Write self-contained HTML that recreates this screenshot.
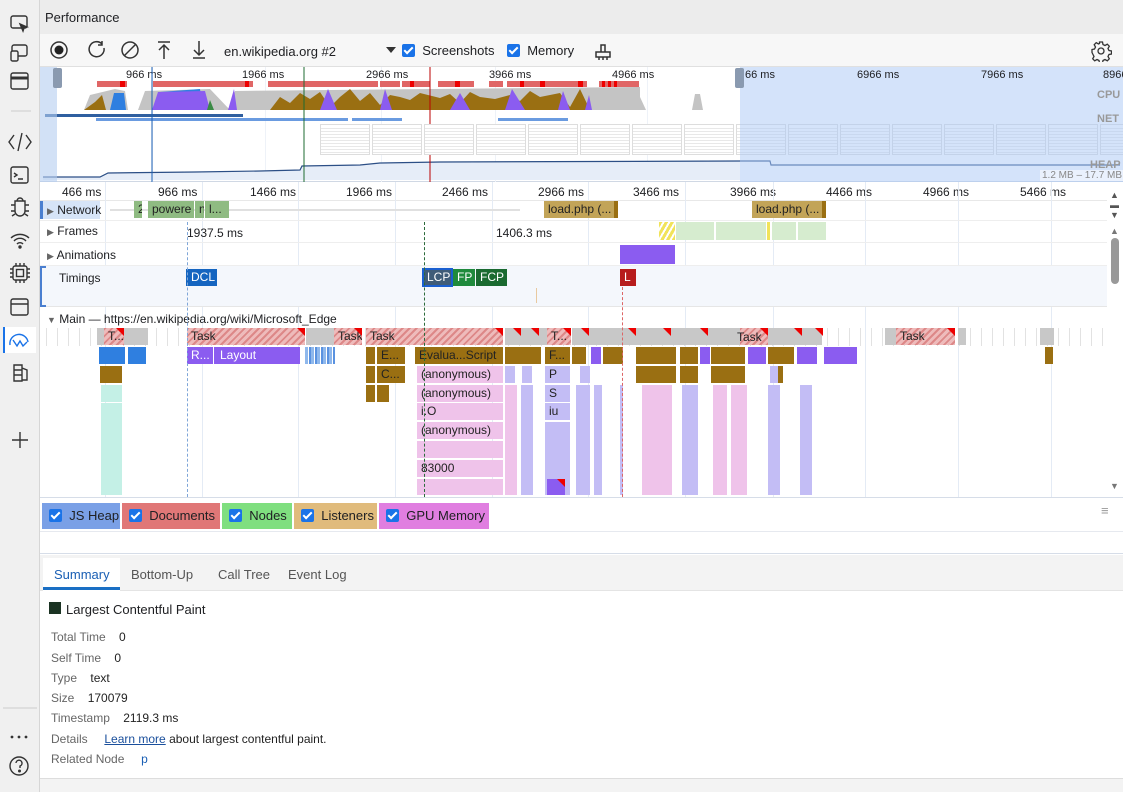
<!DOCTYPE html>
<html><head><meta charset="utf-8">
<style>
*{box-sizing:border-box;margin:0;padding:0}
body{width:1123px;height:792px;overflow:hidden;background:#fff;font-family:"Liberation Sans",sans-serif;font-size:12px;color:#202124;position:relative}
.a{position:absolute}
.t{position:absolute;white-space:nowrap}
.side{left:0;top:0;width:40px;height:792px;background:#f0f0f0;border-right:1px solid #d6d6d6}
.ic{position:absolute;left:10px;width:20px;height:20px}
.hat{background:repeating-linear-gradient(135deg,#d88 0 2px,#eebbbb 2px 5px)}
.g{background:#c8c8c8}
.br{background:#9a6f12}
.pu{background:#8b5cf0}
.pk{background:#efc3ea}
.lv{background:#c3bdf5}
.bl{background:#2f7fe0}
.tq{background:#c4f0e6}
.fl{position:absolute;height:17px;font-size:12px;line-height:17px;padding-left:4px;overflow:hidden;color:#222}
.rc{position:absolute;width:0;height:0;border-top:8px solid #e00;border-left:8px solid transparent}
.cb{display:inline-block;width:13px;height:13px;background:#1a73e8;border-radius:2px;vertical-align:-2px;position:relative}
.cb:after{content:"";position:absolute;left:4px;top:1px;width:3px;height:7px;border:solid #fff;border-width:0 2px 2px 0;transform:rotate(45deg)}
.thumb{position:absolute;top:124px;width:50px;height:31px;border:1px solid #ddd;background:linear-gradient(#fff 0 3px,transparent 3px),repeating-linear-gradient(#e8e8e8 0 1px,#fff 1px 3px);}
.vl{position:absolute;width:1px;background:#e4ebf5}
</style></head><body>

<!-- sidebar -->
<div class="a side"></div>
<svg class="a" style="left:0;top:0" width="40" height="792" fill="none" stroke="#333" stroke-width="1.4">
<rect x="11" y="16" width="16" height="12" rx="2"/><path d="M20 24l3 7 1-3 3-1z" fill="#333"/>
<rect x="12" y="45" width="15" height="11" rx="2"/><rect x="11" y="51" width="7" height="10" rx="1.5" fill="#f0f0f0"/>
<rect x="11" y="73" width="17" height="16" rx="2"/><path d="M11 78h17" stroke-width="3"/>
<path d="M14 135l-5 7 5 7M26 135l5 7-5 7M22 133l-4 18"/>
<rect x="11" y="167" width="17" height="16" rx="2"/><path d="M14 173l3 2-3 2M18 179h5"/>
<path d="M15 201h10v10a5 5 0 0 1-10 0zM17 201a3 3 0 0 1 6 0M11 205h4M25 205h4M11 211h4M25 211h4M12 216l3-2M28 216l-3-2"/>
<path d="M11 238a13 13 0 0 1 18 0M14 241a8 8 0 0 1 12 0M17 244a4 4 0 0 1 6 0"/><circle cx="20" cy="247" r="1" fill="#333"/>
<rect x="13" y="266" width="14" height="14" rx="2"/><rect x="16.5" y="269.5" width="7" height="7"/><path d="M16 263v3M20 263v3M24 263v3M16 280v3M20 280v3M24 280v3M10 269h3M10 273h3M10 277h3M27 269h3M27 273h3M27 277h3"/>
<rect x="11" y="299" width="17" height="16" rx="2"/><path d="M11 304h17"/>
<rect x="4" y="327" width="32" height="26" fill="#fff" stroke="none"/><path d="M4 327v26" stroke="#1a73e8" stroke-width="2"/>
<path d="M10 345a9 9 0 0 1 18-3M13 340l4 6 3-5 3 5 4-4" stroke="#1a73e8"/>
<path d="M14 365h8v16h-8zM14 370h8M14 375h8M22 368l5 2v10h-5"/>
<path d="M20 432v16M12 440h16"/>
<path d="M11 111h20M3 708h34" stroke="#ccc" stroke-width="1"/>
<circle cx="12" cy="737" r="1.4" fill="#333" stroke="none"/><circle cx="19" cy="737" r="1.4" fill="#333" stroke="none"/><circle cx="26" cy="737" r="1.4" fill="#333" stroke="none"/>
<circle cx="19" cy="766" r="9"/><path d="M16 763a3 3 0 1 1 4 3v2"/><circle cx="19.5" cy="771" r=".8" fill="#333"/>
</svg>

<!-- title -->
<div class="a" style="left:40px;top:0;width:1083px;height:34px;background:#ececec"></div>
<div class="t" style="left:45px;top:10px;font-size:13px">Performance</div>

<!-- toolbar -->
<div class="a" style="left:40px;top:34px;width:1083px;height:33px;background:#f7f7f7;border-bottom:1px solid #e0e0e0"></div>
<svg class="a" style="left:40px;top:34px" width="600" height="33" fill="none" stroke="#333" stroke-width="1.5">
<circle cx="19" cy="16" r="8"/><circle cx="19" cy="16" r="4.5" fill="#222" stroke="none"/>
<path d="M62 10a7.5 7.5 0 1 0 2 4M62 7v4h-4"/>
<circle cx="90" cy="16" r="8"/><path d="M84 22l12-12"/>
<path d="M118 8h12M124 11v14M119 16l5-5 5 5"/>
<path d="M153 24h12M159 7v14M154 16l5 5 5-5"/>
<path d="M346 13h10l-5 6z" fill="#333" stroke="none"/>
<path d="M556 18h14v5h-14zM561 18v-7h4v7M559 23v3M563 23v3M567 23v3"/>
</svg>
<div class="t" style="left:224px;top:44px;font-size:13px">en.wikipedia.org #2</div>
<div class="t" style="left:402px;top:43px;font-size:13px"><span class="cb"></span>&nbsp; Screenshots</div>
<div class="t" style="left:507px;top:43px;font-size:13px"><span class="cb"></span>&nbsp; Memory</div>
<svg class="a" style="left:1090px;top:40px" width="22" height="22" fill="none" stroke="#333" stroke-width="1.3"><circle cx="11" cy="11" r="3"/><path d="M9.5 2h3l.5 2.5 2 1 2.3-1.3 2 2-1.3 2.3 1 2 2.5.5v3l-2.5.5-1 2 1.3 2.3-2 2-2.3-1.3-2 1-.5 2.5h-3l-.5-2.5-2-1-2.3 1.3-2-2 1.3-2.3-1-2L2 12.5v-3l2.5-.5 1-2L4.2 4.7l2-2L8.5 4l1-.5z"/></svg>

<!-- overview -->
<div class="a" style="left:40px;top:67px;width:1083px;height:115px;background:#fff;border-bottom:1px solid #d0d8e4"></div>
<div class="vl" style="left:152px;top:67px;height:115px;background:#eef2f8"></div>
<div class="vl" style="left:265px;top:67px;height:115px;background:#eef2f8"></div>
<div class="vl" style="left:381px;top:67px;height:115px;background:#eef2f8"></div>
<div class="vl" style="left:495px;top:67px;height:115px;background:#eef2f8"></div>
<div class="vl" style="left:647px;top:67px;height:115px;background:#eef2f8"></div>
<div class="t" style="left:126px;top:69px;font-size:11px">966 ms</div>
<div class="t" style="left:242px;top:69px;font-size:11px">1966 ms</div>
<div class="t" style="left:366px;top:69px;font-size:11px">2966 ms</div>
<div class="t" style="left:489px;top:69px;font-size:11px">3966 ms</div>
<div class="t" style="left:612px;top:69px;font-size:11px">4966 ms</div>
<svg class="a" style="left:40px;top:67px" width="700" height="115">
<g fill="#e06666"><rect x="57" y="14" width="30" height="6"/><rect x="113" y="14" width="100" height="6"/><rect x="228" y="14" width="110" height="6"/><rect x="340" y="14" width="20" height="6"/><rect x="362" y="14" width="28" height="6"/><rect x="398" y="14" width="36" height="6"/><rect x="449" y="14" width="14" height="6"/><rect x="467" y="14" width="80" height="6"/><rect x="559" y="14" width="40" height="6"/></g>
<g fill="#e00"><rect x="80" y="14" width="5" height="6"/><rect x="205" y="14" width="4" height="6"/><rect x="370" y="14" width="4" height="6"/><rect x="415" y="14" width="5" height="6"/><rect x="480" y="14" width="4" height="6"/><rect x="500" y="14" width="5" height="6"/><rect x="538" y="14" width="5" height="6"/><rect x="562" y="14" width="3" height="6"/><rect x="568" y="14" width="3" height="6"/><rect x="574" y="14" width="3" height="6"/></g>
<path d="M44 43L50 28L75 22L85 24L88 43ZM98 43L105 24L170 22L190 43Z M190 43L195 24L600 20L600 43Z" fill="#c4c4c4"/>
<path d="M44 43L55 35L62 28L66 43Z M230 43L240 30L250 36L260 26L270 32L280 25L290 40L300 30L310 22L320 34L330 26L340 38L350 28L360 30L370 33L380 26L400 31L410 27L420 36L430 25L440 30L455 32L470 28L480 34L490 24L500 30L520 26L530 40L540 22L550 43Z" fill="#9a6f12"/>
<path d="M70 43L74 26L84 26L86 43Z M116 43L120 25L160 22L163 43Z" fill="#2f7fe0"/>
<path d="M112 43L118 25L165 24L170 43Z M188 43L194 22L197 43Z M280 43L288 22L297 43Z M340 43L345 22L352 43Z M410 43L420 26L430 43Z M465 43L472 22L485 43Z M518 43L523 24L530 43Z" fill="#8b5cf0"/>
<path d="M545 43L549 28L552 43Z M568 43L572 32L577 43Z" fill="#8b5cf0"/>
<path d="M167 43L170 33L174 43Z" fill="#3a8a45"/>
<path d="M560 43L565 22L595 21L600 30L606 43Z M652 43L655 27L660 27L663 43Z" fill="#c4c4c4"/>
<rect x="5" y="47" width="198" height="3" fill="#2f5fa0"/>
<rect x="56" y="51" width="252" height="3" fill="#6a9be0"/><rect x="312" y="51" width="50" height="3" fill="#6a9be0"/><rect x="458" y="51" width="70" height="3" fill="#6a9be0"/>
<path d="M3 113V110H60L68 106L155 105L220 104L260 103L262 99L320 98L340 96L400 95L700 94V113Z" fill="#e6edf8"/>
<path d="M3 110H60L68 106L155 105L220 104L260 103L262 99L320 98L340 96L400 95L700 94" fill="none" stroke="#2c4f86" stroke-width="1.2"/>
<line x1="112" y1="0" x2="112" y2="115" stroke="#1a5fb4"/>
<line x1="264" y1="0" x2="264" y2="115" stroke="#1e6b30"/>
<line x1="390" y1="0" x2="390" y2="115" stroke="#b00"/>
</svg>
<div class="thumb" style="left:320px"></div><div class="thumb" style="left:372px"></div><div class="thumb" style="left:424px"></div><div class="thumb" style="left:476px"></div><div class="thumb" style="left:528px"></div><div class="thumb" style="left:580px"></div><div class="thumb" style="left:632px"></div><div class="thumb" style="left:684px"></div><div class="thumb" style="left:736px"></div><div class="thumb" style="left:788px"></div><div class="thumb" style="left:840px"></div><div class="thumb" style="left:892px"></div><div class="thumb" style="left:944px"></div><div class="thumb" style="left:996px"></div><div class="thumb" style="left:1048px"></div><div class="thumb" style="left:1100px"></div>
<svg class="a" style="left:740px;top:67px" width="383" height="115"><path d="M0 94H30L31 98H380" fill="none" stroke="#2c4f86" stroke-width="1.2"/></svg>
<div class="a" style="left:40px;top:67px;width:17px;height:115px;background:rgba(180,205,240,.6)"></div>
<div class="a" style="left:740px;top:67px;width:383px;height:115px;background:rgba(170,200,245,.5)"></div>
<div class="a" style="left:53px;top:68px;width:9px;height:20px;background:#8a9ab0;border-radius:2px"></div>
<div class="a" style="left:735px;top:68px;width:9px;height:20px;background:#8a9ab0;border-radius:2px"></div>
<div class="t" style="left:745px;top:69px;font-size:11px">66 ms</div>
<div class="t" style="left:857px;top:69px;font-size:11px">6966 ms</div>
<div class="t" style="left:981px;top:69px;font-size:11px">7966 ms</div>
<div class="t" style="left:1103px;top:69px;font-size:11px">8966</div>
<div class="t" style="left:1097px;top:89px;font-size:11px;font-weight:bold;color:#999">CPU</div>
<div class="t" style="left:1097px;top:113px;font-size:11px;font-weight:bold;color:#999">NET</div>
<div class="t" style="left:1090px;top:159px;font-size:11px;font-weight:bold;color:#999">HEAP</div>
<div class="t" style="left:1040px;top:170px;font-size:10px;color:#888;background:rgba(255,255,255,.5);padding:0 2px">1.2 MB – 17.7 MB</div>

<!-- ruler -->
<div class="a" style="left:40px;top:182px;width:1083px;height:19px;background:#fff;border-bottom:1px solid #e8e8e8"></div>
<div class="t" style="left:62px;top:185px">466 ms</div><div class="t" style="left:158px;top:185px">966 ms</div><div class="t" style="left:250px;top:185px">1466 ms</div><div class="t" style="left:346px;top:185px">1966 ms</div><div class="t" style="left:442px;top:185px">2466 ms</div><div class="t" style="left:538px;top:185px">2966 ms</div><div class="t" style="left:633px;top:185px">3466 ms</div><div class="t" style="left:730px;top:185px">3966 ms</div><div class="t" style="left:826px;top:185px">4466 ms</div><div class="t" style="left:923px;top:185px">4966 ms</div><div class="t" style="left:1020px;top:185px">5466 ms</div>

<!-- grid -->
<div class="vl" style="left:105px;top:182px;height:315px"></div><div class="vl" style="left:202px;top:182px;height:315px"></div><div class="vl" style="left:298px;top:182px;height:315px"></div><div class="vl" style="left:395px;top:182px;height:315px"></div><div class="vl" style="left:492px;top:182px;height:315px"></div><div class="vl" style="left:588px;top:182px;height:315px"></div><div class="vl" style="left:685px;top:182px;height:315px"></div><div class="vl" style="left:773px;top:182px;height:315px"></div><div class="vl" style="left:865px;top:182px;height:315px"></div><div class="vl" style="left:958px;top:182px;height:315px"></div><div class="vl" style="left:1051px;top:182px;height:315px"></div>

<!-- network -->
<div class="a" style="left:40px;top:201px;width:60px;height:18px;background:#d6e4f7"></div>
<div class="a" style="left:40px;top:201px;width:3px;height:18px;background:#4a7fd0"></div>
<div class="t" style="left:47px;top:203px;font-size:12px"><span style="font-size:9px;color:#666">▶</span> Network</div>
<div class="a" style="left:110px;top:209px;width:410px;height:2px;background:#e0e0e0"></div>
<div class="fl" style="left:134px;top:201px;width:8px;background:#8fbb82">2</div>
<div class="fl" style="left:148px;top:201px;width:46px;background:#8fbb82">powere</div>
<div class="fl" style="left:195px;top:201px;width:9px;background:#8fbb82">n</div>
<div class="fl" style="left:205px;top:201px;width:24px;background:#8fbb82">l...</div>
<div class="fl" style="left:544px;top:201px;width:74px;background:#c2a458">load.php (...</div>
<div class="a" style="left:614px;top:201px;width:4px;height:17px;background:#9a6f12"></div>
<div class="fl" style="left:752px;top:201px;width:74px;background:#c2a458">load.php (...</div>
<div class="a" style="left:822px;top:201px;width:4px;height:17px;background:#9a6f12"></div>
<div class="a" style="left:40px;top:220px;width:1067px;height:1px;background:#eee"></div>

<!-- frames -->
<div class="t" style="left:47px;top:224px"><span style="font-size:9px;color:#666">▶</span> Frames</div>
<div class="t" style="left:187px;top:226px">1937.5 ms</div>
<div class="t" style="left:496px;top:226px">1406.3 ms</div>
<div class="a" style="left:659px;top:222px;width:16px;height:18px;background:repeating-linear-gradient(120deg,#f1e35a 0 3px,#fff 3px 5px)"></div>
<div class="a" style="left:676px;top:222px;width:38px;height:18px;background:#d6eccf"></div>
<div class="a" style="left:716px;top:222px;width:50px;height:18px;background:#d6eccf"></div>
<div class="a" style="left:767px;top:222px;width:3px;height:18px;background:#f1e35a"></div>
<div class="a" style="left:772px;top:222px;width:24px;height:18px;background:#d6eccf"></div>
<div class="a" style="left:798px;top:222px;width:28px;height:18px;background:#d6eccf"></div>
<div class="a" style="left:40px;top:242px;width:1067px;height:1px;background:#eee"></div>

<!-- animations -->
<div class="t" style="left:47px;top:248px"><span style="font-size:9px;color:#666">▶</span> Animations</div>
<div class="a" style="left:620px;top:245px;width:55px;height:19px;background:#8b5cf0"></div>
<div class="a" style="left:40px;top:265px;width:1067px;height:1px;background:#eee"></div>

<!-- timings -->
<div class="a" style="left:40px;top:266px;width:1067px;height:41px;background:#f4f7fc;border-bottom:1px solid #e6e6e6"></div>
<div class="a" style="left:40px;top:266px;width:2px;height:41px;background:#4a7fd0"></div>
<div class="a" style="left:40px;top:266px;width:6px;height:2px;background:#4a7fd0"></div>
<div class="a" style="left:40px;top:305px;width:6px;height:2px;background:#4a7fd0"></div>
<div class="t" style="left:59px;top:271px">Timings</div>
<div class="fl" style="left:186px;top:269px;width:31px;background:#1565c0;color:#fff;padding-left:5px">DCL</div>
<div class="fl" style="left:422px;top:268px;width:31px;height:19px;background:#3f5c78;color:#fff;border:2px solid #1a5fd0;padding-left:3px;line-height:15px">LCP</div>
<div class="fl" style="left:453px;top:269px;width:22px;background:#1f8a3c;color:#fff">FP</div>
<div class="fl" style="left:476px;top:269px;width:31px;background:#1a6a30;color:#fff">FCP</div>
<div class="fl" style="left:620px;top:269px;width:16px;background:#b71c1c;color:#fff;padding-left:4px">L</div>
<div class="a" style="left:536px;top:288px;width:1px;height:15px;background:#e8c9a0"></div>

<!-- main header -->
<div class="t" style="left:47px;top:312px"><span style="font-size:9px;color:#666">▼</span> Main — https://en.wikipedia.org/wiki/Microsoft_Edge</div>

<!-- flame chart row1 tasks -->
<div class="a" style="left:40px;top:328px;width:1067px;height:18px;background:repeating-linear-gradient(90deg,transparent 0 6px,#e2e2e2 6px 7px,transparent 7px 11px)"></div>
<div class="fl g" style="left:97px;top:328px;width:31px"></div>
<div class="fl hat" style="left:104px;top:328px;width:20px">T...</div><div class="rc" style="left:116px;top:328px"></div>
<div class="fl g" style="left:128px;top:328px;width:20px"></div>
<div class="fl hat" style="left:187px;top:328px;width:118px">Task</div><div class="rc" style="left:297px;top:328px"></div>
<div class="fl g" style="left:306px;top:328px;width:30px"></div>
<div class="fl hat" style="left:334px;top:328px;width:28px">Task</div><div class="rc" style="left:354px;top:328px"></div>
<div class="fl hat" style="left:366px;top:328px;width:137px">Task</div><div class="rc" style="left:495px;top:328px"></div>
<div class="fl g" style="left:505px;top:328px;width:42px"></div><div class="rc" style="left:513px;top:328px"></div><div class="rc" style="left:531px;top:328px"></div>
<div class="fl hat" style="left:547px;top:328px;width:24px">T...</div><div class="rc" style="left:563px;top:328px"></div>
<div class="fl g" style="left:572px;top:328px;width:200px"></div>
<div class="a hat" style="left:740px;top:328px;width:28px;height:17px"></div>
<div class="t" style="left:737px;top:330px">Task</div>
<div class="rc" style="left:581px;top:328px"></div><div class="rc" style="left:628px;top:328px"></div><div class="rc" style="left:663px;top:328px"></div><div class="rc" style="left:700px;top:328px"></div><div class="rc" style="left:760px;top:328px"></div>
<div class="fl g" style="left:772px;top:328px;width:50px"></div><div class="rc" style="left:794px;top:328px"></div><div class="rc" style="left:815px;top:328px"></div>
<div class="fl g" style="left:885px;top:328px;width:70px"></div>
<div class="fl hat" style="left:896px;top:328px;width:59px;background-color:transparent">Task</div><div class="rc" style="left:947px;top:328px"></div>
<div class="fl g" style="left:958px;top:328px;width:8px"></div>
<div class="fl g" style="left:1040px;top:328px;width:14px"></div>

<!-- row2 -->
<div class="fl bl" style="left:99px;top:347px;width:26px"></div><div class="fl bl" style="left:128px;top:347px;width:18px"></div>
<div class="fl pu" style="left:187px;top:347px;width:26px;color:#fff">R...</div>
<div class="fl pu" style="left:214px;top:347px;width:86px;color:#fff;padding-left:6px">Layout</div>
<div class="a" style="left:305px;top:347px;width:30px;height:17px;background:repeating-linear-gradient(90deg,#8fb8ec 0 3px,#fff 3px 4px,#5a92e0 4px 6px)"></div>
<div class="fl br" style="left:366px;top:347px;width:9px"></div>
<div class="fl br" style="left:377px;top:347px;width:28px">E...</div>
<div class="fl br" style="left:415px;top:347px;width:88px">Evalua...Script</div>
<div class="fl br" style="left:505px;top:347px;width:36px"></div>
<div class="fl br" style="left:545px;top:347px;width:25px">F...</div>
<div class="fl br" style="left:572px;top:347px;width:14px"></div>
<div class="fl pu" style="left:591px;top:347px;width:10px"></div>
<div class="fl br" style="left:603px;top:347px;width:20px"></div>
<div class="fl br" style="left:636px;top:347px;width:40px"></div>
<div class="fl br" style="left:680px;top:347px;width:18px"></div>
<div class="fl pu" style="left:700px;top:347px;width:10px"></div>
<div class="fl br" style="left:711px;top:347px;width:34px"></div>
<div class="fl pu" style="left:748px;top:347px;width:18px"></div>
<div class="fl br" style="left:768px;top:347px;width:26px"></div>
<div class="fl pu" style="left:797px;top:347px;width:20px"></div>
<div class="fl pu" style="left:824px;top:347px;width:33px"></div>
<div class="fl br" style="left:1045px;top:347px;width:8px"></div>
<!-- row3 -->
<div class="fl br" style="left:100px;top:366px;width:22px"></div>
<div class="fl br" style="left:366px;top:366px;width:9px"></div>
<div class="fl br" style="left:377px;top:366px;width:28px">C...</div>
<div class="fl pk" style="left:417px;top:366px;width:86px">(anonymous)</div>
<div class="fl lv" style="left:545px;top:366px;width:25px">P</div>
<div class="fl lv" style="left:505px;top:366px;width:10px"></div><div class="fl lv" style="left:522px;top:366px;width:10px"></div>
<div class="fl lv" style="left:580px;top:366px;width:10px"></div>
<div class="fl br" style="left:636px;top:366px;width:40px"></div><div class="fl br" style="left:680px;top:366px;width:18px"></div><div class="fl br" style="left:711px;top:366px;width:34px"></div>
<div class="fl lv" style="left:770px;top:366px;width:10px"></div><div class="fl br" style="left:778px;top:366px;width:5px"></div>
<!-- row4-9 -->
<div class="fl tq" style="left:101px;top:385px;width:21px"></div>
<div class="fl br" style="left:366px;top:385px;width:9px"></div><div class="fl br" style="left:377px;top:385px;width:12px"></div>
<div class="fl pk" style="left:417px;top:385px;width:86px">(anonymous)</div>
<div class="fl lv" style="left:545px;top:385px;width:25px">S</div>
<div class="fl pk" style="left:417px;top:403px;width:86px">i.O</div>
<div class="fl lv" style="left:545px;top:403px;width:25px">iu</div>
<div class="fl pk" style="left:417px;top:422px;width:86px">(anonymous)</div>
<div class="fl pk" style="left:417px;top:441px;width:86px"></div>
<div class="fl pk" style="left:417px;top:460px;width:86px">83000</div>
<div class="fl pk" style="left:417px;top:479px;width:86px;height:16px"></div>
<div class="a tq" style="left:101px;top:403px;width:21px;height:92px"></div>
<div class="a pk" style="left:505px;top:385px;width:12px;height:110px"></div>
<div class="a lv" style="left:521px;top:385px;width:12px;height:110px"></div>
<div class="a lv" style="left:545px;top:422px;width:25px;height:73px"></div>
<div class="fl pu" style="left:547px;top:479px;width:18px;height:16px"></div><div class="rc" style="left:557px;top:479px"></div>
<div class="a lv" style="left:576px;top:385px;width:14px;height:110px"></div>
<div class="a lv" style="left:594px;top:385px;width:8px;height:110px"></div>
<div class="a pk" style="left:642px;top:385px;width:30px;height:110px"></div>
<div class="a lv" style="left:682px;top:385px;width:16px;height:110px"></div>
<div class="a pk" style="left:713px;top:385px;width:14px;height:110px"></div>
<div class="a pk" style="left:731px;top:385px;width:16px;height:110px"></div>
<div class="a lv" style="left:768px;top:385px;width:12px;height:110px"></div>
<div class="a lv" style="left:800px;top:385px;width:12px;height:110px"></div>
<div class="a lv" style="left:620px;top:385px;width:3px;height:110px"></div>

<!-- markers -->
<div class="a" style="left:187px;top:222px;width:0;height:275px;border-left:1px dashed #7fa6d8"></div>
<div class="a" style="left:424px;top:222px;width:0;height:275px;border-left:1px dashed #2b6b3b"></div>
<div class="a" style="left:622px;top:287px;width:0;height:210px;border-left:1px dashed #d66"></div>

<!-- scrollbar -->
<div class="a" style="left:1107px;top:182px;width:16px;height:315px;background:#fff"></div>
<div class="t" style="left:1110px;top:190px;font-size:9px;color:#555;line-height:10px">▲<br>▬<br>▼</div>
<div class="t" style="left:1110px;top:226px;font-size:9px;color:#777">▲</div>
<div class="a" style="left:1111px;top:238px;width:8px;height:46px;background:#999;border-radius:4px"></div>
<div class="t" style="left:1110px;top:481px;font-size:9px;color:#777">▼</div>

<!-- counters -->
<div class="a" style="left:40px;top:497px;width:1083px;height:57px;background:#fff;border-top:1px solid #d6dde8;border-bottom:1px solid #d6dde8"></div>
<div class="a" style="left:40px;top:531px;width:1083px;height:1px;background:#e6e9ef"></div>
<div class="t" style="left:42px;top:503px;width:78px;height:26px;background:#7aa0e6;font-size:13px;line-height:26px;padding-left:7px"><span class="cb"></span>&nbsp; JS Heap</div>
<div class="t" style="left:122px;top:503px;width:98px;height:26px;background:#e07777;font-size:13px;line-height:26px;padding-left:7px"><span class="cb"></span>&nbsp; Documents</div>
<div class="t" style="left:222px;top:503px;width:70px;height:26px;background:#7fdf7f;font-size:13px;line-height:26px;padding-left:7px"><span class="cb"></span>&nbsp; Nodes</div>
<div class="t" style="left:294px;top:503px;width:83px;height:26px;background:#e0bb7c;font-size:13px;line-height:26px;padding-left:7px"><span class="cb"></span>&nbsp; Listeners</div>
<div class="t" style="left:379px;top:503px;width:110px;height:26px;background:#e07ee0;font-size:13px;line-height:26px;padding-left:7px"><span class="cb"></span>&nbsp; GPU Memory</div>
<div class="t" style="left:1101px;top:503px;font-size:13px;color:#999">≡</div>

<!-- tabs -->
<div class="a" style="left:40px;top:555px;width:1083px;height:36px;background:#f3f3f3;border-bottom:1px solid #e4e4e4"></div>
<div class="a" style="left:43px;top:558px;width:77px;height:33px;background:#fff"></div>
<div class="a" style="left:43px;top:587px;width:77px;height:3px;background:#1a6fc4"></div>
<div class="t" style="left:54px;top:567px;font-size:13px;color:#1a5fb4">Summary</div>
<div class="t" style="left:131px;top:567px;font-size:13px;color:#555">Bottom-Up</div>
<div class="t" style="left:218px;top:567px;font-size:13px;color:#555">Call Tree</div>
<div class="t" style="left:288px;top:567px;font-size:13px;color:#555">Event Log</div>

<!-- summary -->
<div class="a" style="left:49px;top:602px;width:12px;height:12px;background:#1b3323"></div>
<div class="t" style="left:66px;top:602px;font-size:13px">Largest Contentful Paint</div>
<div class="t" style="left:51px;top:630px;color:#666">Total Time &nbsp;&nbsp;&nbsp;<span style="color:#222">0</span></div>
<div class="t" style="left:51px;top:651px;color:#666">Self Time &nbsp;&nbsp;&nbsp;<span style="color:#222">0</span></div>
<div class="t" style="left:51px;top:671px;color:#666">Type &nbsp;&nbsp;&nbsp;<span style="color:#222">text</span></div>
<div class="t" style="left:51px;top:691px;color:#666">Size &nbsp;&nbsp;&nbsp;<span style="color:#222">170079</span></div>
<div class="t" style="left:51px;top:711px;color:#666">Timestamp &nbsp;&nbsp;&nbsp;<span style="color:#222">2119.3 ms</span></div>
<div class="t" style="left:51px;top:732px;color:#666">Details &nbsp;&nbsp;&nbsp;&nbsp;<span style="color:#1a4f9c;text-decoration:underline">Learn more</span><span style="color:#222"> about largest contentful paint.</span></div>
<div class="t" style="left:51px;top:752px;color:#666">Related Node &nbsp;&nbsp;&nbsp;&nbsp;<span style="color:#1a5fb4">p</span></div>
<div class="a" style="left:40px;top:778px;width:1083px;height:14px;background:#f3f3f3;border-top:1px solid #ddd"></div>
</body></html>
